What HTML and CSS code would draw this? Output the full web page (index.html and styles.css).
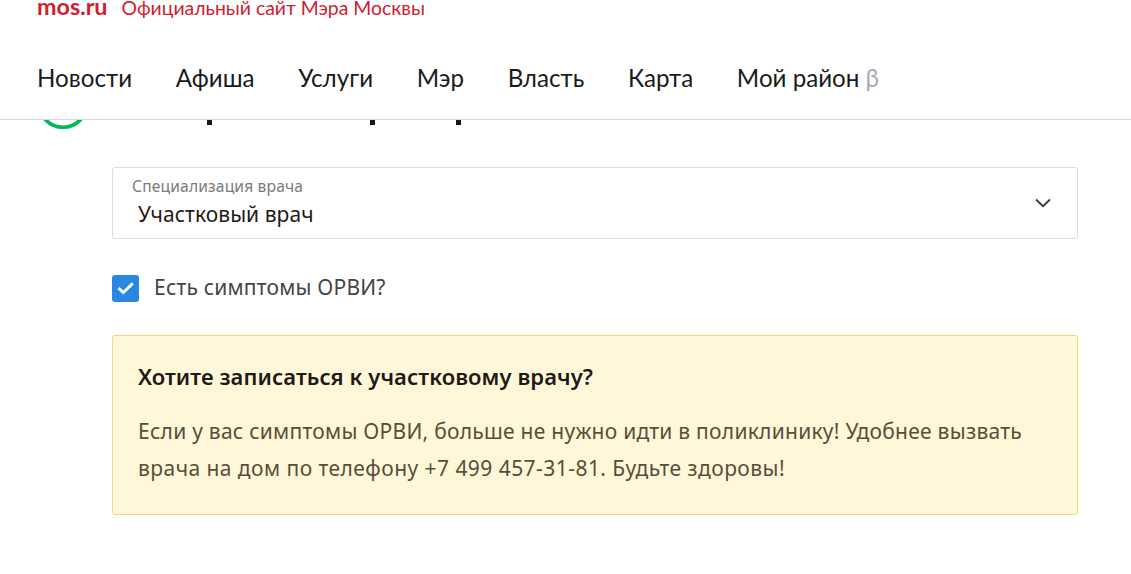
FILE: index.html
```html
<!DOCTYPE html>
<html lang="ru">
<head>
<meta charset="utf-8">
<title>mos.ru</title>
<link rel="stylesheet" href="styles.css">
</head>
<body>
<header class="site-header">
  <div class="brand-row">
    <a class="brand">mos.ru</a>
    <span class="brand-tag">Официальный сайт Мэра Москвы</span>
  </div>
  <nav class="main-nav">
    <a>Новости</a>
    <a>Афиша</a>
    <a>Услуги</a>
    <a>Мэр</a>
    <a>Власть</a>
    <a>Карта</a>
    <a>Мой район <span class="beta">β</span></a>
  </nav>
</header>
<div class="step-peek">
  <svg class="step-ring" width="52" height="52" viewBox="0 0 52 52"><circle cx="26" cy="26" r="24.2" fill="none" stroke="#00b956" stroke-width="3.6"/></svg>
  <span class="stem stem-1"></span>
  <span class="stem stem-2"></span>
  <span class="stem stem-3"></span>
</div>
<main class="form">
  <div class="select">
    <div class="select-text">
      <div class="select-label">Специализация врача</div>
      <div class="select-value">Участковый врач</div>
    </div>
    <svg class="chevron" width="16" height="10" viewBox="0 0 16 10"><path d="M1 1.5 8 8.2 15 1.5" fill="none" stroke="#3c3c3c" stroke-width="1.9"/></svg>
  </div>
  <label class="check-row">
    <span class="checkbox"><svg width="17" height="14" viewBox="0 0 17 14"><path d="M1.5 7 6.3 11.6 15.8 2.4" fill="none" stroke="#fff" stroke-width="2.9"/></svg></span>
    <span class="check-label">Есть симптомы ОРВИ?</span>
  </label>
  <section class="notice">
    <h2>Хотите записаться к участковому врачу?</h2>
    <p>Если у вас симптомы ОРВИ, больше не нужно идти в поликлинику! Удобнее вызвать<br><span class="line-two">врача на дом по телефону +7 499 457-31-81. Будьте здоровы!</span></p>
  </section>
</main>
</body>
</html>
```
FILE: styles.css
```css
* { box-sizing: border-box; }
html, body { margin: 0; height: 574px; overflow: hidden; background: #fff; }
body { font-family: "Noto Sans", "Open Sans", sans-serif; color: #1f1a14; position: relative; }
.site-header {
  position: absolute; top: 0; left: 0; right: 0; height: 120px;
  background: #fff; border-bottom: 1px solid #d8d8d8;
  padding-left: 37px; font-family: Lato, "Liberation Sans", sans-serif; z-index: 2;
}
.brand-row { display: flex; align-items: baseline; height: 30px; margin-top: -9px; color: #d0202e; font-size: 19.4px; line-height: 30px; gap: 14px; }
.brand { font-weight: 700; font-size: 23.3px; }
.main-nav { display: flex; gap: 43.7px; margin-top: 42px; font-size: 24.15px; line-height: 30px; color: #1a1a1a; }
.beta { color: #a5acb8; }
.step-peek { position: absolute; top: 77px; left: 37px; height: 52px; display: flex; align-items: flex-end; z-index: 1; }
.stem { width: 5px; height: 10px; margin-bottom: 4px; background: #1f1508; }
.stem-1 { margin-left: 118px; }
.stem-2 { margin-left: 158px; }
.stem-3 { margin-left: 81px; }
.form { position: absolute; top: 167px; left: 112px; width: 966px; }
.select {
  height: 72px; border: 1px solid #dcdcdf; border-radius: 3px; background: #fff;
  display: flex; align-items: center; justify-content: space-between; padding: 0 26px 0 19px;
}
.select-label { font-size: 15.6px; letter-spacing: 0.16px; line-height: 20px; color: #7a7a7a; margin-top: -3px; }
.select-value { font-size: 21px; letter-spacing: 0.05px; line-height: 28px; margin-left: 6px; margin-top: 4px; }
.check-row { display: flex; align-items: center; gap: 15px; margin-top: 35px; height: 28px; }
.checkbox { width: 27px; height: 27px; border-radius: 3px; background: #2a88e0; display: flex; align-items: center; justify-content: center; }
.check-label { font-size: 21px; letter-spacing: 0.2px; color: #444; margin-top: -3px; }
.notice {
  margin-top: 33px; height: 180px; padding: 24px 25px 0;
  background: #fff7da; border: 1px solid #f5d873; border-radius: 3px;
}
.notice h2 { margin: 0; font-size: 22px; letter-spacing: 0.08px; line-height: 32px; font-weight: 600; color: #1f1a14; }
.notice p { margin: 21px 0 0; font-size: 21px; letter-spacing: 0.26px; line-height: 37px; color: #574e38; }
.line-two { letter-spacing: 0.45px; }
```
